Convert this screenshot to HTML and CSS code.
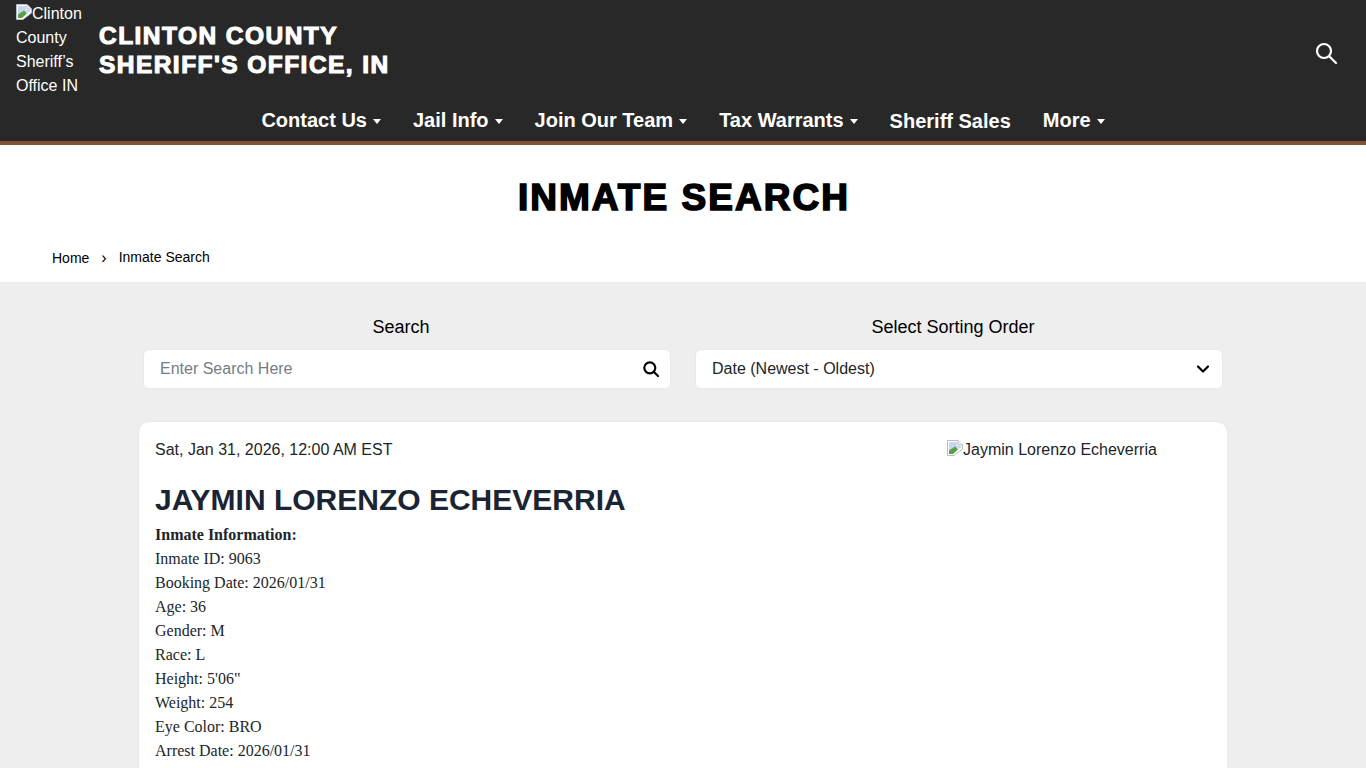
FILE: index.html
```html
<!DOCTYPE html>
<html lang="en">
<head>
    <meta charset="UTF-8">
    <meta name="viewport" content="width=device-width, initial-scale=1.0">
    <title>Inmate Search - Clinton County Sheriff's Office, IN</title>
    <link rel="stylesheet" href="styles.css">
</head>
<body>
    <!-- Site header -->
    <header class="site-header">
        <div class="brand-row">
            <a class="logo" href="#">
                <svg class="broken-img" viewBox="0 0 16 16" aria-hidden="true">
                    <path d="M0.5 0.5H11L15.5 5V9L7 15.5H0.5Z" fill="#fff" stroke="#b4bcc8"/>
                    <path d="M2 2H10V6H14V8L2 11Z" fill="#c9d6ea"/>
                    <path d="M2 14V10.5L8 6.5L11 9.5L6 14Z" fill="#5aa04a"/>
                    <path d="M11 .5V5H15.5" fill="#eef2f7" stroke="#b4bcc8"/>
                </svg>Clinton County Sheriff’s Office IN
            </a>
            <div class="site-name">CLINTON COUNTY<br>SHERIFF'S OFFICE, IN</div>
            <button class="search-toggle" aria-label="Search">
                <svg viewBox="0 0 24 24" width="24" height="24" fill="none" stroke="#fff" stroke-width="2.2" stroke-linecap="round">
                    <circle cx="10" cy="10" r="7"/>
                    <path d="M15.5 15.5L22 22"/>
                </svg>
            </button>
        </div>
        <nav class="main-nav">
            <a href="#" class="has-sub">Contact Us</a>
            <a href="#" class="has-sub">Jail Info</a>
            <a href="#" class="has-sub">Join Our Team</a>
            <a href="#" class="has-sub">Tax Warrants</a>
            <a href="#" class="nav-plain">Sheriff Sales</a>
            <a href="#" class="has-sub">More</a>
        </nav>
    </header>

    <!-- Page title and breadcrumb -->
    <section class="page-title">
        <h1>INMATE SEARCH</h1>
        <div class="breadcrumb">
            <a href="#" class="crumb-home">Home</a>
            <span class="crumb-sep">›</span>
            <span>Inmate Search</span>
        </div>
    </section>

    <main class="content">
        <div class="filters">
            <div class="filter">
                <label for="search">Search</label>
                <div class="field">
                    <input type="text" id="search" placeholder="Enter Search Here">
                    <svg class="field-icon" viewBox="0 0 16 16" width="16" height="16" fill="none" stroke="#000" stroke-width="2.2" stroke-linecap="round">
                        <circle cx="6.8" cy="6.8" r="5.5"/>
                        <path d="M11 11L15 15"/>
                    </svg>
                </div>
            </div>
            <div class="filter">
                <label>Select Sorting Order</label>
                <div class="field">
                    <div class="select-value">Date (Newest - Oldest)</div>
                    <svg class="field-icon" viewBox="0 0 16 16" width="16" height="16" fill="none" stroke="#000" stroke-width="2.2" stroke-linecap="round" stroke-linejoin="round">
                        <path d="M3 5.5L8 10.5L13 5.5"/>
                    </svg>
                </div>
            </div>
        </div>

        <article class="inmate-card">
            <div class="inmate-main">
                <div class="inmate-date">Sat, Jan 31, 2026, 12:00 AM EST</div>
                <h2>JAYMIN LORENZO ECHEVERRIA</h2>
                <div class="inmate-info">
                    <strong>Inmate Information:</strong><br>
                    Inmate ID: 9063<br>
                    Booking Date: 2026/01/31<br>
                    Age: 36<br>
                    Gender: M<br>
                    Race: L<br>
                    Height: 5'06"<br>
                    Weight: 254<br>
                    Eye Color: BRO<br>
                    Arrest Date: 2026/01/31
                </div>
            </div>
            <div class="inmate-photo">
                <svg class="broken-img" viewBox="0 0 16 16" aria-hidden="true">
                    <path d="M0.5 0.5H11L15.5 5V9L7 15.5H0.5Z" fill="#fff" stroke="#b4bcc8"/>
                    <path d="M2 2H10V6H14V8L2 11Z" fill="#c9d6ea"/>
                    <path d="M2 14V10.5L8 6.5L11 9.5L6 14Z" fill="#5aa04a"/>
                    <path d="M11 .5V5H15.5" fill="#eef2f7" stroke="#b4bcc8"/>
                </svg>Jaymin Lorenzo Echeverria
            </div>
        </article>
    </main>
</body>
</html>
```

FILE: styles.css
```css
* {
    margin: 0;
    padding: 0;
    box-sizing: border-box;
}

html, body {
    height: 100vh;
    overflow: hidden;
}

body {
    background-color: #eee;
    font-family: "Liberation Sans", Arial, sans-serif;
    font-size: 16px;
    line-height: 24px;
    color: #212529;
}

a {
    color: inherit;
    text-decoration: none;
}

.broken-img {
    display: inline-block;
    width: 16px;
    height: 16px;
    vertical-align: -1px;
}

/* Header */
.site-header {
    background-color: #282828;
    border-bottom: 4px solid #7f5334;
    height: 145px;
    color: #fff;
}

.brand-row {
    display: flex;
    align-items: center;
    height: 97px;
    padding: 3px 16px 0;
}

.logo {
    display: block;
    width: 83px;
    padding-right: 12px;
    flex-shrink: 0;
}

.site-name {
    font-size: 24.5px;
    line-height: 29px;
    font-weight: bold;
    letter-spacing: 1.45px;
    -webkit-text-stroke: 1.1px #fff;
    margin-top: -1px;
}

.search-toggle {
    margin-left: auto;
    margin-right: 12px;
    margin-top: 6px;
    background: none;
    border: none;
    display: flex;
}

.main-nav {
    display: flex;
    justify-content: center;
    align-items: center;
    gap: 32px;
    height: 44px;
    padding-top: 2px;
    font-size: 20px;
    font-weight: bold;
}

.main-nav .has-sub::after {
    content: "";
    display: inline-block;
    margin-left: 6px;
    vertical-align: 3px;
    border-left: 4px solid transparent;
    border-right: 4px solid transparent;
    border-top: 5px solid #fff;
}

.nav-plain {
    margin-top: 2px;
}

/* Title band */
.page-title {
    background-color: #fff;
    height: 137px;
    padding-top: 31px;
}

.page-title h1 {
    text-align: center;
    color: #000;
    font-size: 37px;
    line-height: 44px;
    font-weight: bold;
    letter-spacing: 2.05px;
    padding-left: 2px;
    -webkit-text-stroke: 1.6px #000;
}

.breadcrumb {
    display: flex;
    align-items: center;
    margin-top: 26px;
    padding-left: 52px;
    font-size: 14px;
    line-height: 20px;
    color: #000;
}

.crumb-home {
    margin-top: 2px;
}

.crumb-sep {
    margin: 2px 12px 0;
    font-size: 16px;
}

/* Filters */
.content {
    padding: 33px 139px 0;
}

.filters {
    display: grid;
    grid-template-columns: 1fr 1fr;
    gap: 24px;
    padding: 0 4px;
}

.filter label {
    display: block;
    text-align: center;
    color: #000;
    font-size: 18px;
    line-height: 24px;
    padding-right: 12px;
    margin-bottom: 10px;
}

.field {
    position: relative;
    height: 40px;
    background-color: #fff;
    border: 1px solid #e9e9e9;
    border-radius: 6px;
}

.field input,
.select-value {
    display: block;
    width: 100%;
    height: 100%;
    padding: 0 40px 0 16px;
    border: none;
    background: transparent;
    outline: none;
    font-family: inherit;
    font-size: 16px;
    line-height: 38px;
    color: #212529;
}

.field input::placeholder {
    color: #757c88;
    opacity: 1;
}

.field-icon {
    position: absolute;
    top: 11px;
    right: 11px;
}

/* Inmate card */
.inmate-card {
    display: grid;
    grid-template-columns: 3fr 1fr;
    margin-top: 33px;
    padding: 16px;
    min-height: 500px;
    background-color: #fff;
    border-radius: 10px;
    box-shadow: 0 0 2px rgba(0, 0, 0, 0.08);
}

.inmate-card h2 {
    margin-top: 20px;
    font-size: 30px;
    line-height: 36px;
    font-weight: bold;
    color: #1a2433;
}

.inmate-info {
    margin-top: 5px;
    font-family: "Liberation Serif", "Times New Roman", serif;
}
```
